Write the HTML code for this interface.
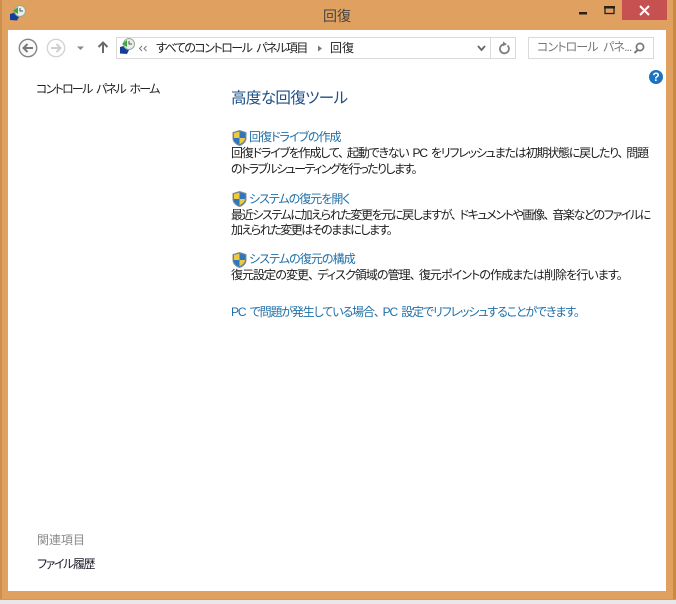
<!DOCTYPE html>
<html lang="ja"><head><meta charset="utf-8"><style>
html,body{margin:0;padding:0}
body{width:676px;height:604px;position:relative;overflow:hidden;background:#e8e8ea;font-family:"Liberation Sans","Noto Sans CJK JP",sans-serif;font-size:12px;color:#1a1a1a;font-feature-settings:"palt"}
.a{position:absolute;white-space:nowrap;line-height:16px}
.l{color:#1f6fa8}
i{font-style:normal;margin-right:4px}
svg{position:absolute;overflow:visible}
</style></head><body>
<div class="a" style="left:0;top:0;width:673px;height:599px;background:#e0a060"></div>
<div class="a" style="left:673px;top:0;width:3px;height:599px;background:#c98a3e"></div>
<div class="a" style="left:0;top:0;width:2px;height:599px;background:#cf8f4c"></div>
<div class="a" style="left:8px;top:30px;width:658px;height:561px;background:#fff"></div>
<div class="a" style="left:0;top:599px;width:676px;height:1px;background:#a8a29a"></div>
<div class="a" style="left:323px;top:7px;font-size:14px;line-height:18px;color:#444">回復</div>
<div class="a" style="left:622px;top:0;width:45px;height:20px;background:#c75050"></div>
<svg style="left:0;top:0" width="676" height="70">
<path d="M640 6l9 9M649 6l-9 9" stroke="#fff" stroke-width="2" fill="none"/>
<rect x="605" y="7.500" width="9" height="6" fill="none" stroke="#2a2116" stroke-width="1.300"/><rect x="604" y="6" width="11" height="2.500" fill="#2a2116"/>
<rect x="579" y="12" width="8" height="2.500" fill="#2a2116"/>
<path d="M10 14l7-2 2 5-2 3.500-7-.5z" fill="#123f9c"/><circle cx="20" cy="11" r="5.500" fill="#e9eee9" stroke="#9aa89a"/><path d="M20 8v3h3" stroke="#555" fill="none"/><path d="M13 11l5-4v7z" fill="#3aa83a"/>
<circle cx="28" cy="48" r="8.700" fill="#fafafa" stroke="#858585" stroke-width="1.400"/><path d="M33 48h-9M27.500 44l-4 4 4 4" fill="none" stroke="#7a7a7a" stroke-width="2"/>
<circle cx="56" cy="48" r="8.700" fill="#fff" stroke="#d4d4d4" stroke-width="1.400"/><path d="M51 48h9M56.500 44l4 4-4 4" fill="none" stroke="#cfcfcf" stroke-width="2"/>
<path d="M77 46.500h7l-3.500 3.500z" fill="#8a8a8a"/>
<path d="M103 53V43M98.500 47l4.500-4.500 4.500 4.500" fill="none" stroke="#6a6a6a" stroke-width="2"/>
<rect x="116.500" y="37.500" width="399" height="21" fill="#fff" stroke="#d9d9d9"/>
<rect x="528.500" y="37.500" width="125" height="21" fill="#fff" stroke="#d9d9d9"/>
<path d="M490.500 38v20" stroke="#d9d9d9"/>
<path d="M120 47l7-2 2 5-2 4-7-.5z" fill="#123f9c"/><circle cx="129" cy="44" r="5.500" fill="#e9eee9" stroke="#9aa89a"/><path d="M129 41v3h3" stroke="#555" fill="none"/><path d="M122 44l5-4v7z" fill="#3aa83a"/>
<path d="M142 46l-2.500 2.500 2.500 2.500M146.500 46l-2.500 2.500 2.500 2.500" fill="none" stroke="#777"/>
<path d="M318 45.500l4 3-4 3z" fill="#777"/>
<path d="M478 46l3.500 4 3.500-4" fill="none" stroke="#666" stroke-width="1.800"/>
<path d="M507.500 45.500a4.500 4.500 0 1 1-3-1.200" fill="none" stroke="#808080" stroke-width="1.800"/><path d="M503 41.500l4 2.800-4 2z" fill="#808080"/>
<circle cx="640" cy="47" r="3.600" fill="none" stroke="#777" stroke-width="1.700"/><path d="M637.500 50l-3 3" stroke="#777" stroke-width="2"/>
<circle cx="656" cy="77" r="7" fill="#1c73c0"/>
</svg>
<div class="a" style="left:651px;top:69px;width:10px;text-align:center;color:#fff;font-weight:bold;font-size:12px">?</div>
<div class="a" style="left:156px;top:40px;color:#222;letter-spacing:-1.5px;word-spacing:3px">すべてのコントロール パネル項目</div>
<div class="a" style="left:330px;top:40px;color:#222">回復</div>
<div class="a" style="left:537px;top:39px;color:#777;letter-spacing:-.9px;word-spacing:3px">コントロール パネ...</div>
<div class="a" style="left:36px;top:81px;color:#222;letter-spacing:-1.75px;word-spacing:3px">コントロール パネル ホーム</div>
<div class="a" style="left:231px;top:89px;font-size:15.500px;line-height:20px;color:#1c4f86;letter-spacing:-.6px">高度な回復ツール</div>

<svg style="left:232px;top:130px" width="15" height="16"><path d="M7.500 0.500l6.500 2v6c0 3-3 6-6.500 7-3.500-1-6.500-4-6.500-7v-6z" fill="#2f76c0" stroke="#8a8f90"/><path d="M7.500 1.500v6.500h-5.500v-5zM7.500 8h5.500c0 3-2.500 5-5.500 6.200z" fill="#f0c93c"/></svg>
<div class="a l" style="left:249px;top:129px;letter-spacing:-1px">回復ドライブの作成</div>
<div class="a" style="left:231px;top:145px;letter-spacing:-1.2px;word-spacing:2px">回復ドライブを作成して<i>、</i>起動できない PC をリフレッシュまたは初期状態に戻したり<i>、</i>問題</div>
<div class="a" style="left:231px;top:161px;letter-spacing:-1.57px">のトラブルシューティングを行ったりします。</div>

<svg style="left:232px;top:191px" width="15" height="16"><path d="M7.500 0.500l6.500 2v6c0 3-3 6-6.500 7-3.500-1-6.500-4-6.500-7v-6z" fill="#2f76c0" stroke="#8a8f90"/><path d="M7.500 1.500v6.500h-5.500v-5zM7.500 8h5.500c0 3-2.500 5-5.500 6.200z" fill="#f0c93c"/></svg>
<div class="a l" style="left:249px;top:191px;letter-spacing:-1px">システムの復元を開く</div>
<div class="a" style="left:231px;top:207px;letter-spacing:-1.38px">最近システムに加えられた変更を元に戻しますが<i>、</i>ドキュメントや画像<i>、</i>音楽などのファイルに</div>
<div class="a" style="left:231px;top:222px;letter-spacing:-1.5px">加えられた変更はそのままにします。</div>

<svg style="left:232px;top:252px" width="15" height="16"><path d="M7.500 0.500l6.500 2v6c0 3-3 6-6.500 7-3.500-1-6.500-4-6.500-7v-6z" fill="#2f76c0" stroke="#8a8f90"/><path d="M7.500 1.500v6.500h-5.500v-5zM7.500 8h5.500c0 3-2.500 5-5.500 6.200z" fill="#f0c93c"/></svg>
<div class="a l" style="left:249px;top:251px;letter-spacing:-.9px">システムの復元の構成</div>
<div class="a" style="left:231px;top:267px;letter-spacing:-.92px">復元設定の変更<i>、</i>ディスク領域の管理<i>、</i>復元ポイントの作成または削除を行います。</div>

<div class="a l" style="left:231px;top:304px;letter-spacing:-1.13px;word-spacing:2px">PC で問題が発生している場合<i>、</i>PC 設定でリフレッシュすることができます。</div>
<div class="a" style="left:37px;top:532px;color:#888">関連項目</div>
<div class="a" style="left:37px;top:556px;color:#1a1a2a;letter-spacing:-1.4px">ファイル履歴</div>
</body></html>
